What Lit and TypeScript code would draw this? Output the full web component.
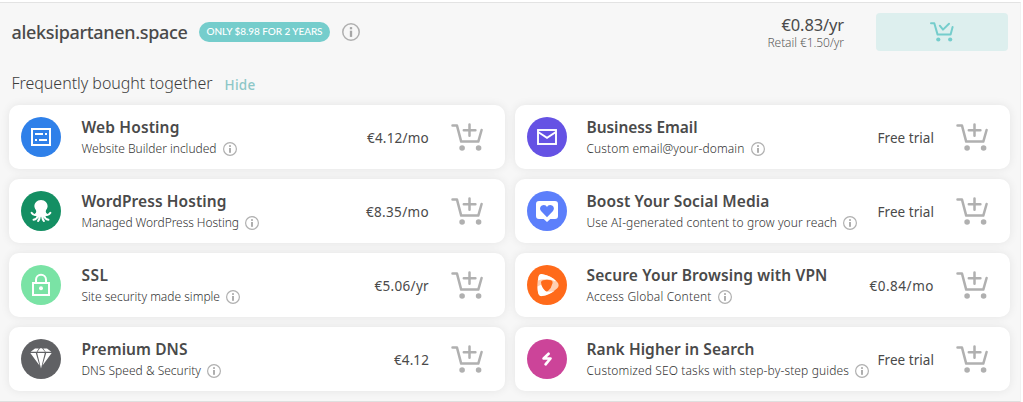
import { LitElement, html, svg, css } from "lit";
import { customElement, property, query } from "lit/decorators.js";

/** One line of text, tracked so that it spans the given width. */
@customElement("tracked-text")
class TrackedText extends LitElement {
  static styles = css`
    :host { display: block; white-space: nowrap; }
    .run { display: inline-block; }
  `;
  @property() text = "";
  @property({ type: Number }) span = 0;
  @query(".run") run!: HTMLElement;

  updated() {
    this.run.style.letterSpacing = "0px";
    const natural = this.run.getBoundingClientRect().width;
    const step = (this.span - natural) / this.text.length;
    this.run.style.letterSpacing = `${step.toFixed(3)}px`;
  }
  render() {
    return html`<span class="run">${this.text}</span>`;
  }
}

const info = (size: number) => html`
  <svg class="info" width=${size} height=${size} viewBox="0 0 14 14">
    <circle cx="7" cy="7" r="6.4" fill="none" stroke="#b0b0b0" stroke-width="1.2" />
    <rect x="6.1" y="3.2" width="1.8" height="1.7" fill="#a6a6a6" />
    <rect x="6.1" y="6" width="1.8" height="4.8" fill="#a6a6a6" />
  </svg>`;

const addCart = html`
  <svg class="cart" width="32" height="28" viewBox="0 0 32 28" fill="none" stroke="#b0b0b0"
    stroke-width="2.5" stroke-linecap="round" stroke-linejoin="round">
    <path d="M1.5 2.6H6L10.2 18.6H27.3L30.6 7" />
    <path d="M18.5 1.4V12.8M12.8 7.2H24.4" />
    <circle cx="11.1" cy="25" r="2.8" fill="#b0b0b0" stroke="none" />
    <circle cx="27.6" cy="25" r="2.8" fill="#b0b0b0" stroke="none" />
  </svg>`;

const glyphs = {
  hosting: svg`<g fill="#fff"><path fill-rule="evenodd" d="M10 11H30V29H10ZM12 13V27H28V13Z"/>
    <path d="M14 16H22V18H14ZM24 16H26V18H24ZM14 22H16V24H14ZM18 22H26V24H18Z"/></g>`,
  octopus: svg`<g fill="#fff"><path d="M20 9C15.8 9 13.3 12 13.4 15.6C13.5 17.6 14.8 18.5 15.2 20C15.4 21.5 14.6 22.3 14 22.8L16 25.5L19 25.5L20 26.6L21 25.5L24 25.5L26 22.8C25.4 22.3 24.6 21.5 24.8 20C25.2 18.5 26.5 17.6 26.6 15.6C26.7 12 24.2 9 20 9Z"/></g>
    <path d="M16.5 21.5C16 24.8 12.4 24.9 10.6 21.8M17 24.5C16.4 27.4 14.8 28.3 12.5 28.7M18.7 24C18.9 27 18.4 28.8 17.1 30M23.5 21.5C24 24.8 27.6 24.9 29.4 21.8M23 24.5C23.6 27.4 25.2 28.3 27.5 28.7M21.3 24C21.1 27 21.6 28.8 22.9 30" fill="none" stroke="#fff" stroke-width="2" stroke-linecap="round"/>`,
  lock: svg`<g fill="none" stroke="#fff" stroke-width="2"><rect x="12" y="18" width="16" height="12"/>
    <path d="M15 18V14.8A5 5 0 0 1 25 14.8V18"/></g><circle cx="20" cy="23.2" r="2" fill="#fff"/>`,
  diamond: svg`<g fill="#fff"><path d="M14 9.5H17.8L15.6 12.8H9.7ZM19 9.2H21L24 12.8H16.4ZM22.2 9.5H26L30.3 12.8H24.6Z"/>
    <path d="M9.3 14H14.8L18.5 26.5ZM16.2 14H23.8L20 29.5ZM25.2 14H30.7L21.5 26.5Z"/></g>`,
  mail: svg`<g fill="none" stroke="#fff" stroke-width="1.9"><rect x="11" y="13" width="18" height="14"/>
    <path d="M11.5 15.3L20 20.8L28.5 15.3"/></g>`,
  heart: svg`<path d="M12 10H28Q31 10 31 13V25Q31 28 28 28H23.3L20 31L16.7 28H12Q9 28 9 25V13Q9 10 12 10Z" fill="#fff"/>
    <path d="M20 26.2L14 20C11.6 16.8 14.3 14 16.8 14C18.4 14 19.4 14.8 20 16C20.6 14.8 21.6 14 23.2 14C25.7 14 28.4 16.8 26 20Z" fill="#5c7ffb"/>`,
  vpn: svg`<path d="M15.5 9.2Q12.2 8.6 11.4 12.2Q9.4 20 11.2 28.3Q12 31.4 15 31.1Q23 29.8 30 23.6Q33.3 20.3 30 16.8Q24 10.6 15.5 9.2Z" fill="#ffd0b3"/>
    <path d="M15.5 9.2Q12.2 8.6 11.4 12.2L10.9 15.5Q14.5 14 20 14.2Q26 14.6 27.3 16.2L29 16Q24 10.6 15.5 9.2ZM11 27.5Q12 31.4 15 31.1Q22 30 27.6 25.7Q22 27.6 18.2 25.7Q15.4 23.2 14.3 19.5L10.6 21.5Q10.6 25 11 27.5Z" fill="#fff"/>
    <path d="M14 17.3Q14.2 15.6 16 15.2Q20 14.3 24 15.2Q25.9 15.8 25.6 18Q24.4 23.2 21 26Q19.6 27 18.2 25.7Q14.4 22.2 14 17.3Z" fill="#ff6a1a"/>`,
  bolt: svg`<path d="M21.6 14.8L16.6 19.5H23.5L18.6 25.3" fill="none" stroke="#fff" stroke-width="2.7" stroke-linecap="round" stroke-linejoin="round"/>`,
};

interface Offer {
  icon: keyof typeof glyphs;
  color: string;
  title: string;
  titleSpan: number;
  note: string;
  noteSpan: number;
  price: string;
  priceSpan: number;
}

const offers: Offer[] = [
  { icon: "hosting", color: "#2f80e9", title: "Web Hosting", titleSpan: 98, note: "Website Builder included", noteSpan: 135, price: "€4.12/mo", priceSpan: 62 },
  { icon: "mail", color: "#6552e4", title: "Business Email", titleSpan: 111, note: "Custom email@your-domain", noteSpan: 158, price: "Free trial", priceSpan: 56.5 },
  { icon: "octopus", color: "#148f63", title: "WordPress Hosting", titleSpan: 145, note: "Managed WordPress Hosting", noteSpan: 157.5, price: "€8.35/mo", priceSpan: 63 },
  { icon: "heart", color: "#5c7ffb", title: "Boost Your Social Media", titleSpan: 183, note: "Use AI-generated content to grow your reach", noteSpan: 250.5, price: "Free trial", priceSpan: 56.5 },
  { icon: "lock", color: "#7ae3a5", title: "SSL", titleSpan: 27, note: "Site security made simple", noteSpan: 138.5, price: "€5.06/yr", priceSpan: 54.5 },
  { icon: "vpn", color: "#ff6a1a", title: "Secure Your Browsing with VPN", titleSpan: 241, note: "Access Global Content", noteSpan: 125, price: "€0.84/mo", priceSpan: 64.5 },
  { icon: "diamond", color: "#606164", title: "Premium DNS", titleSpan: 106, note: "DNS Speed & Security", noteSpan: 119.5, price: "€4.12", priceSpan: 35 },
  { icon: "bolt", color: "#cc4499", title: "Rank Higher in Search", titleSpan: 168, note: "Customized SEO tasks with step-by-step guides", noteSpan: 262.5, price: "Free trial", priceSpan: 56.5 },
];

@customElement("app-root")
class AppRoot extends LitElement {
  static styles = css`
    :host {
      display: block;
      height: 402px;
      box-sizing: border-box;
      padding-top: 2px;
      background: #fff;
      overflow: hidden;
      color: #4a4a4a;
      font-family: "Noto Sans", sans-serif;
    }
    svg { display: block; flex: none; }
    .panel {
      box-sizing: border-box;
      height: 400px;
      width: 1021px;
      border-top: 1px solid #e3e3e3;
      border-bottom: 1px solid #dfdfdf;
      border-right: 1px solid #f1f1f1;
      background: #f7f7f7;
      padding: 10px 10px 0 9px;
    }
    .head { display: flex; align-items: flex-start; height: 60px; padding-left: 2.5px; }
    .domain { font-size: 18px; font-weight: 500; line-height: 24px; margin-top: 7px; }
    .badge {
      display: flex;
      justify-content: center;
      width: 131px;
      height: 20px;
      margin: 9px 12px 0 11.5px;
      border-radius: 10px;
      background: #75cdcc;
      color: #fff;
      font-family: Lato, sans-serif;
      font-size: 10px;
      font-weight: 500;
      line-height: 19px;
    }
    .head .info { margin-top: 10px; }
    .quote { margin-left: auto; margin-right: 32px; display: flex; flex-direction: column; align-items: flex-end; }
    .now { font-size: 16.5px; line-height: 22px; margin-top: 1px; }
    .retail { font-weight: 300; font-size: 12px; line-height: 13px; color: #5c5c5c; }
    .in-cart {
      display: flex;
      align-items: center;
      justify-content: center;
      width: 132px;
      height: 38px;
      margin-right: 2px;
      border: 0;
      border-radius: 4px;
      background: #ddefee;
      padding: 0;
    }
    .sub { display: flex; align-items: flex-start; height: 32px; padding-left: 2.5px; gap: 12px; }
    .together { font-weight: 300; font-size: 16px; line-height: 20px; color: #3c3c3c; }
    .hide { font-size: 13.5px; font-weight: 500; line-height: 20px; margin-top: 2px; color: #8dc7c7; }
    .grid { display: grid; grid-template-columns: 496px 495px; gap: 10px; }
    .card {
      display: flex;
      align-items: center;
      box-sizing: border-box;
      height: 64px;
      padding: 0 22px 0 12px;
      border-radius: 10px;
      background: #fff;
      box-shadow: 0 0 10px rgba(0, 0, 0, 0.08);
    }
    .copy { margin-left: 20.5px; flex: 1; }
    .card:nth-child(even) .copy { margin-left: 19.5px; }
    .title { font-size: 15.5px; font-weight: 600; line-height: 20px; margin-top: -1px; }
    .note {
      display: flex;
      align-items: center;
      gap: 6px;
      font-weight: 300;
      font-size: 12px;
      line-height: 16px;
      margin-top: 4px;
      color: #333;
    }
    .price { font-size: 13.5px; line-height: 18px; margin: 2px 22px 0 0; }
  `;

  card(o: Offer) {
    return html`
      <article class="card">
        <svg width="40" height="40" viewBox="0 0 40 40">
          <circle cx="20" cy="20" r="20" fill=${o.color} />${glyphs[o.icon]}
        </svg>
        <div class="copy">
          <tracked-text class="title" .text=${o.title} .span=${o.titleSpan}></tracked-text>
          <div class="note">
            <tracked-text .text=${o.note} .span=${o.noteSpan}></tracked-text>${info(14)}
          </div>
        </div>
        <tracked-text class="price" .text=${o.price} .span=${o.priceSpan}></tracked-text>
        ${addCart}
      </article>`;
  }

  render() {
    return html`
      <section class="panel">
        <header class="head">
          <tracked-text class="domain" .text=${"aleksipartanen.space"} .span=${176}></tracked-text>
          <div class="badge"><tracked-text .text=${"ONLY $8.98 FOR 2 YEARS"} .span=${116}></tracked-text></div>
          ${info(18)}
          <div class="quote">
            <tracked-text class="now" .text=${"€0.83/yr"} .span=${62.5}></tracked-text>
            <tracked-text class="retail" .text=${"Retail €1.50/yr"} .span=${76.5}></tracked-text>
          </div>
          <button class="in-cart">
            <svg width="24" height="20" viewBox="0 0 24 20" fill="none" stroke="#75cdcc" stroke-width="2"
              stroke-linecap="round" stroke-linejoin="round">
              <path d="M1 1.3H4.3L7.6 12.6H20.6L22.6 5" />
              <path d="M9.8 3.7L13 7.6L19 1.7" />
              <circle cx="8.3" cy="17.5" r="2.1" fill="#75cdcc" stroke="none" />
              <circle cx="20.2" cy="17.5" r="2.1" fill="#75cdcc" stroke="none" />
            </svg>
          </button>
        </header>
        <div class="sub">
          <tracked-text class="together" .text=${"Frequently bought together"} .span=${201}></tracked-text>
          <tracked-text class="hide" .text=${"Hide"} .span=${31}></tracked-text>
        </div>
        <main class="grid">${offers.map((o) => this.card(o))}</main>
      </section>`;
  }
}
